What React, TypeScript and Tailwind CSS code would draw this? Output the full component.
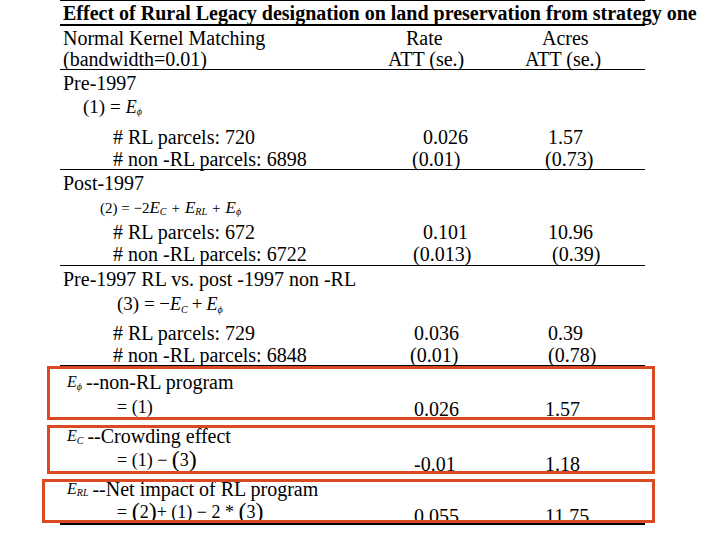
import type { ReactNode } from "react";

function E({ sub, size = "text-[18px]" }: { sub: string; size?: string }) {
  return (
    <span className={`${size} italic`}>
      E<sub className="text-[10px] italic">{sub}</sub>
    </span>
  );
}

function Row({
  label,
  rate,
  acres,
  h,
  rateCls = "pl-[13px]",
  acresCls = "pl-[13px]",
  extra = "",
  numCls = "",
}: {
  label: ReactNode;
  rate?: string;
  acres?: string;
  h: string;
  rateCls?: string;
  acresCls?: string;
  extra?: string;
  numCls?: string;
}) {
  return (
    <div className={`flex ${h} items-center ${extra}`}>
      <div className="w-[350px] shrink-0 whitespace-nowrap">{label}</div>
      <div className={`w-[125px] shrink-0 ${rateCls} ${numCls}`}>{rate}</div>
      <div className={`w-[110px] shrink-0 ${acresCls} ${numCls}`}>{acres}</div>
    </div>
  );
}

const Paren = ({ children }: { children: ReactNode }) => (
  <span className="inline-block h-[18px] text-[24px] leading-[18px] font-light align-[-1px]">{children}</span>
);

export default function App() {
  return (
    <div className="relative w-[720px] h-[540px] bg-white text-black overflow-hidden font-['Liberation_Serif','Times_New_Roman',serif]">
      <div className="ml-[60px] w-[585px] text-[20px] leading-[22px]">
        {/* title */}
        <div className="h-[26px] border-t border-b-2 border-black pl-[3px] flex items-center">
          <span className="font-bold text-[20px] whitespace-nowrap">
            Effect of Rural Legacy designation on land preservation from strategy one
          </span>
        </div>

        {/* header */}
        <div className="flex h-[23px] items-center pl-[3px]">
          <div className="w-[343px] shrink-0">Normal Kernel Matching</div>
          <div className="w-[136px] shrink-0">Rate</div>
          <div className="shrink-0">Acres</div>
        </div>
        <div className="flex h-[21px] items-center pl-[3px] border-b border-black">
          <div className="w-[325px] shrink-0">(bandwidth=0.01)</div>
          <div className="w-[137px] shrink-0">ATT (se.)</div>
          <div className="shrink-0">ATT (se.)</div>
        </div>

        {/* pre-1997 */}
        <div className="h-[25px] flex items-center pl-[3px]">Pre-1997</div>
        <div className="h-[23px] flex items-center pl-[23px] text-[19px]">
          (1) = <span className="ml-[5px]"><E sub="ϕ" /></span>
        </div>
        <div className="h-[7px]" />
        <Row h="h-[23px]" label={<span className="pl-[53px]"># RL parcels: 720</span>} rate="0.026" acres="1.57" />
        <Row
          h="h-[22px]"
          extra="border-b border-black"
          label={<span className="pl-[53px]"># non -RL parcels: 6898</span>}
          rate="(0.01)"
          rateCls="pl-[2px]"
          acres="(0.73)"
          acresCls="pl-[10px]"
        />

        {/* post-1997 */}
        <div className="h-[26px] flex items-center pl-[3px]">Post-1997</div>
        <div className="h-[23px] flex items-center pl-[40px] text-[15px]">
          (2) = −2<E sub="C" size="text-[17px]" />
          <span className="mx-[5px]">+</span>
          <E sub="RL" size="text-[17px]" />
          <span className="mx-[5px]">+</span>
          <E sub="ϕ" size="text-[17px]" />
        </div>
        <div className="h-[1px]" />
        <Row h="h-[23px]" label={<span className="pl-[53px]"># RL parcels: 672</span>} rate="0.101" acres="10.96" />
        <Row
          h="h-[23px]"
          extra="border-b border-black"
          label={<span className="pl-[53px]"># non -RL parcels: 6722</span>}
          rate="(0.013)"
          rateCls="pl-[3px]"
          acres="(0.39)"
          acresCls="pl-[17px]"
        />

        {/* pre RL vs post non-RL */}
        <div className="h-[26px] flex items-center pl-[3px]">Pre-1997 RL vs. post -1997 non -RL</div>
        <div className="h-[24px] flex items-center pl-[57px] text-[19px]">
          (3) = −<E sub="C" /> <span className="mx-[4px]">+</span> <E sub="ϕ" />
        </div>
        <div className="h-[5px]" />
        <Row h="h-[23px]" label={<span className="pl-[53px]"># RL parcels: 729</span>} rate="0.036" rateCls="pl-[4px]" acres="0.39" />
        <Row
          h="h-[23px]"
          extra="border-b-2 border-black"
          label={<span className="pl-[53px]"># non -RL parcels: 6848</span>}
          rate="(0.01)"
          rateCls="pl-[0px]"
          acres="(0.78)"
        />

        {/* E_phi */}
        <div className="h-[2px]" />
        <div className="h-[26px] flex items-center pl-[7px]">
          <E sub="ϕ" size="text-[16px]" />
          <span className="ml-[4px]">--non-RL program</span>
        </div>
        <Row
          h="h-[25px]"
          extra="border-b-2 border-black"
          numCls="pt-[5px]"
          label={<span className="pl-[57px] text-[18px]">= (1)</span>}
          rate="0.026"
          rateCls="pl-[4px]"
          acres="1.57"
          acresCls="pl-[10px]"
        />

        {/* E_C */}
        <div className="h-[4px]" />
        <div className="h-[24px] flex items-center pl-[7px]">
          <E sub="C" size="text-[16px]" />
          <span className="ml-[4px]">--Crowding effect</span>
        </div>
        <Row
          h="h-[25px]"
          extra="border-b-2 border-black"
          numCls="pt-[8px]"
          label={
            <span className="pl-[57px] text-[18px]">
              = (1) − <Paren>(</Paren>3<Paren>)</Paren>
            </span>
          }
          rate="-0.01"
          rateCls="pl-[4px]"
          acres="1.18"
          acresCls="pl-[10px]"
        />

        {/* E_RL */}
        <div className="h-[4px]" />
        <div className="h-[23px] flex items-center pl-[7px]">
          <E sub="RL" size="text-[16px]" />
          <span className="ml-[4px]">--Net impact of RL program</span>
        </div>
        <Row
          h="h-[25px]"
          extra="border-b-2 border-black"
          numCls="pt-[8px]"
          label={
            <span className="pl-[57px] text-[18px]">
              = <Paren>(</Paren>2<Paren>)</Paren>+ (1) − 2 * <Paren>(</Paren>3<Paren>)</Paren>
            </span>
          }
          rate="0.055"
          rateCls="pl-[4px]"
          acres="11.75"
          acresCls="pl-[10px]"
        />
      </div>

      {/* red highlight boxes */}
      <div className="absolute left-[47px] top-[366px] w-[608px] h-[54px] border-[3px] border-[#d94a20] pointer-events-none" />
      <div className="absolute left-[47px] top-[425px] w-[608px] h-[49px] border-[3px] border-[#d94a20] pointer-events-none" />
      <div className="absolute left-[42px] top-[479px] w-[613px] h-[44px] border-[3px] border-[#d94a20] pointer-events-none" />
    </div>
  );
}
